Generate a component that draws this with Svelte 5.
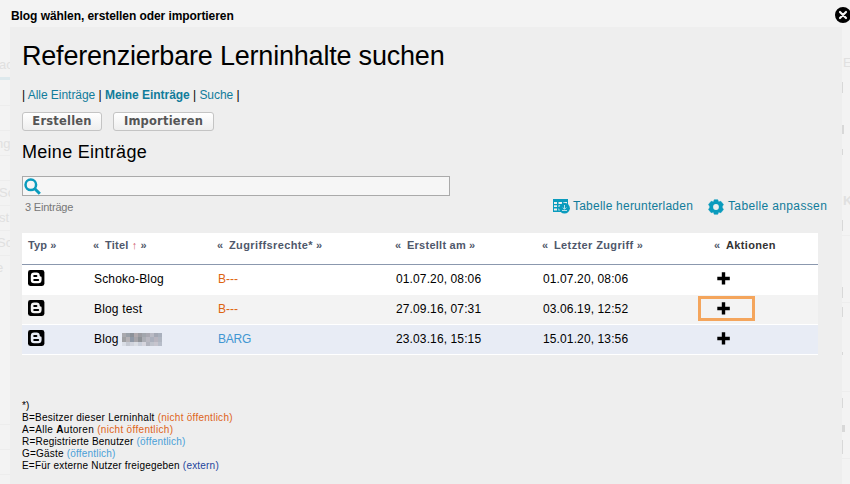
<script>
  const columns = [
    { label: 'Typ', after: true, w: 66, ls: 0.15 },
    { label: 'Titel', before: true, after: true, sorted: true, w: 124, ls: 0.25 },
    { label: 'Zugriffsrechte*', before: true, after: true, w: 178, ls: 0.38 },
    { label: 'Erstellt am', before: true, after: true, w: 147, ls: 0.25 },
    { label: 'Letzter Zugriff', before: true, after: true, w: 172, ls: 0.38 },
    { label: 'Aktionen', before: true, plain: true, w: 109, ls: 0.35 }
  ];
  const rows = [
    { title: 'Schoko-Blog', rights: 'B---', created: '01.07.20, 08:06', access: '01.07.20, 08:06' },
    { title: 'Blog test', rights: 'B---', created: '27.09.16, 07:31', access: '03.06.19, 12:52', marked: true },
    { title: 'Blog', rights: 'BARG', created: '23.03.16, 15:15', access: '15.01.20, 13:56', hidden: true, open: true }
  ];
  const mosaic = [
    '#a9a9ae', '#9aa0a8', '#8c9199', '#b0a9ad', '#9c9ca2', '#a2a6ad', '#aaa9b2', '#b9bac4', '#a4a8b4', '#a9b0bd',
    '#9fa0a3', '#b5b2b6', '#8f98a6', '#a6a4a9', '#8e9297', '#acaeb5', '#b9b8c1', '#abb0bd', '#b8b5bf', '#b0b6c1',
    '#d9dde5', '#c5c9d2', '#d0d3dc', '#dadde3', '#c9ced9', '#d6d5dd', '#b2b4be', '#bfc3cc', '#c7c5ce', '#b7bdc9'
  ];
</script>

<div class="page">
  <div class="ghost" aria-hidden="true">
    <span style="left:-1px;top:57px">ac</span>
    <i style="left:0;top:77px;width:10px;height:3px;background:#dde9ed"></i>
    <span style="left:-4px;top:136px">ng</span>
    <i class="rule" style="left:0;top:105px"></i>
    <i class="rule" style="left:0;top:130px"></i>
    <i class="rule" style="left:0;top:155px"></i>
    <i class="rule" style="left:0;top:180px"></i>
    <span style="left:-1px;top:185px">Sc</span>
    <i class="rule" style="left:0;top:205px"></i>
    <span style="left:-1px;top:210px">st</span>
    <i class="rule" style="left:0;top:230px"></i>
    <span style="left:-3px;top:235px">Sc</span>
    <i class="rule" style="left:0;top:255px"></i>
    <span style="left:-4px;top:260px">e</span>
    <i class="rule" style="left:0;top:424px"></i>
    <i class="rule" style="left:0;top:449px"></i>
    <i class="rule" style="left:0;top:474px"></i>
    <span style="left:843px;top:55px">E</span>
    <b style="left:843px;top:193px">K</b>
    <i style="left:842px;top:82px;width:1px;height:11px"></i>
    <i style="left:842px;top:125px;width:2px;height:9px"></i>
    <i style="left:842px;top:149px;width:1px;height:6px"></i>
    <i style="left:842px;top:220px;width:1px;height:11px"></i>
    <i class="rule" style="left:842px;top:235px"></i>
    <i style="left:842px;top:287px;width:1px;height:11px"></i>
    <i class="rule" style="left:842px;top:302px"></i>
    <i style="left:842px;top:307px;width:1px;height:10px"></i>
    <i style="left:842px;top:352px;width:1px;height:3px"></i>
    <i class="rule" style="left:842px;top:391px"></i>
    <i style="left:842px;top:398px;width:1px;height:10px"></i>
    <i style="left:842px;top:425px;width:3px;height:7px"></i>
    <i style="left:842px;top:440px;width:1px;height:14px"></i>
    <i class="rule" style="left:842px;top:458px"></i>
  </div>

  <header>
    <strong>Blog wählen, erstellen oder importieren</strong>
    <svg class="close" width="16" height="16" viewBox="0 0 16 16">
      <circle cx="8" cy="8" r="8" />
      <path d="M5 5l6 6M11 5l-6 6" stroke="#f3f3f3" stroke-width="2.2" stroke-linecap="round" />
    </svg>
  </header>

  <main>
    <h1>Referenzierbare Lerninhalte suchen</h1>
    <nav>| <a>Alle Einträge</a> | <a class="active">Meine Einträge</a> | <a>Suche</a> |</nav>
    <div class="buttons">
      <button class="create">Erstellen</button>
      <button class="import">Importieren</button>
    </div>
    <h2>Meine Einträge</h2>
    <div class="search">
      <svg width="17" height="17" viewBox="0 0 17 17" fill="none" stroke="#0a9bbd">
        <circle cx="6.8" cy="6.8" r="5.3" stroke-width="2.5" />
        <path d="M10.8 10.8l5 5" stroke-width="3" />
      </svg>
    </div>
    <div class="bar">
      <span class="count">3 Einträge</span>
      <a class="tool download">
        <svg width="17" height="15" viewBox="0 0 17 15">
          <path d="M0 0H15V13H0Z" fill="#0a9bbd" />
          <path d="M1 3H4V5H1ZM5.5 3H9V5H5.5ZM10.5 3H14V5H10.5ZM1 6.3H4V8H1ZM5.5 6.3H9V8H5.5ZM1 9.5H4V11.5H1ZM5.5 9.5H9V11.5H5.5Z" fill="#eee" />
          <circle cx="11.5" cy="9.2" r="5.4" fill="#0a9bbd" />
          <path d="M11.5 6V10M9.7 8.5L11.5 10.3L13.3 8.5M9 11.5H14" stroke="#b5dfe9" fill="none" />
        </svg>
        <span>Tabelle herunterladen</span>
      </a>
      <a class="tool adjust">
        <svg width="16" height="16" viewBox="0 0 16 16">
          <path d="M6.2 0.8H9.8L10.5 3L12.8 2.3L15.4 5.4L14 8L15.4 10.6L12.8 13.7L10.5 13L9.8 15.2H6.2L5.5 13L3.2 13.7L.6 10.6L2 8L.6 5.4L3.2 2.3L5.5 3Z" fill="#0a9bbd" stroke="#0a9bbd" stroke-width=".6" />
          <circle cx="8" cy="8" r="2.9" fill="#eee" />
        </svg>
        <span>Tabelle anpassen</span>
      </a>
    </div>

    <div class="table">
      <div class="row head">
        {#each columns as c}
          <div class="cell" class:plain={c.plain} style="width:{c.w}px;letter-spacing:{c.ls}px">
            {#if c.before}<span class="arrow before">«</span>{/if}<span>{c.label}</span>{#if c.sorted}<span class="sort">↑</span>{/if}{#if c.after}<span class="arrow after">»</span>{/if}
          </div>
        {/each}
      </div>
      {#each rows as r}
        <div class="row">
          <div class="cell typ">
            <svg width="17" height="16" viewBox="0 0 17 16">
              <rect width="16.4" height="16" rx="2.4" />
              <path class="b" d="M6.2 2.6H8.6Q11.6 2.6 11.7 5.4Q11.7 6.5 12.7 6.5Q13.6 6.6 13.6 7.8V9.8Q13.6 13.3 10.2 13.3H6.2Q2.8 13.3 2.8 10V6Q2.8 2.6 6.2 2.6Z" />
              <path d="M6.2 6H8.4M6.2 10H10.2" stroke="#000" stroke-width="2" stroke-linecap="round" />
            </svg>
          </div>
          <div class="cell title">
            {r.title}
            {#if r.hidden}
              <span class="mosaic">{#each mosaic as m}<i style="background:{m}"></i>{/each}</span>
            {/if}
          </div>
          <div class="cell rights" class:open={r.open}>{r.rights}</div>
          <div class="cell created">{r.created}</div>
          <div class="cell access">{r.access}</div>
          <div class="cell action">
            <svg width="13" height="13" viewBox="0 0 13 13"><path d="M4.8 .3H8.2V4.8H12.8V8.2H8.2V12.6H4.8V8.2H.3V4.8H4.8Z" /></svg>
            {#if r.marked}<div class="marker"></div>{/if}
          </div>
        </div>
      {/each}
    </div>

    <div class="legend">
      <p>*)</p>
      <p class="l1"><b>B</b>=<b>B</b>esitzer dieser Lerninhalt <em class="orange">(nicht öffentlich)</em></p>
      <p class="l2">A=Alle <b class="strong">A</b>utoren <em class="orange">(nicht öffentlich)</em></p>
      <p class="l3"><b>R</b>=<b>R</b>egistrierte Benutzer <em class="blue">(öffentlich)</em></p>
      <p class="l4"><b>G</b>=<b>G</b>äste <em class="blue">(öffentlich)</em></p>
      <p class="l5">E=Für externe Nutzer freigegeben <em class="navy">(extern)</em></p>
    </div>
  </main>
</div>

<style>
  :global(body) { margin: 0; }
  .page { position: relative; box-sizing: border-box; width: 850px; height: 484px; overflow: hidden; background: #f3f3f3; font: 12px "Liberation Sans", Arial, sans-serif; color: #000; }
  .ghost span, .ghost b, .ghost i { position: absolute; font-size: 13px; line-height: 15px; color: #e0e0e0; }
  .ghost i { background: #d8d8d8; }
  .ghost i.rule { width: 10px; height: 1px; background: #ededed; }
  header { position: relative; display: flex; justify-content: space-between; box-sizing: border-box; height: 27px; padding: 5px 0 0 11px; }
  header strong { font-size: 12px; line-height: 22px; letter-spacing: -0.07px; }
  .close { margin: 2px -1px 0 0; }
  main { position: relative; box-sizing: border-box; width: 832px; height: 457px; margin-left: 10px; padding: 12px 12px 0; background: #eee; }
  h1 { margin: 0; font-size: 27px; line-height: 34px; font-weight: 400; white-space: nowrap; letter-spacing: -0.2px; }
  nav { margin-top: 14px; line-height: 16px; white-space: nowrap; letter-spacing: -0.04px; }
  a { color: #117c9b; }
  .active { font-weight: 700; }
  .buttons { display: flex; gap: 11px; margin-top: 9px; }
  button { box-sizing: border-box; height: 19px; padding: 0; border: 1px solid #c4c4c4; border-radius: 3px; background: linear-gradient(#fff, #eee); color: #555; font: bold 11.5px/17px "DejaVu Sans", Verdana, sans-serif; letter-spacing: 0.2px; }
  .create { width: 80px; }
  .import { width: 101px; }
  h2 { margin: 9px 0 0; font-size: 18px; line-height: 24px; font-weight: 400; letter-spacing: 0.28px; }
  .search { box-sizing: border-box; display: flex; width: 428px; height: 20px; margin-top: 12px; padding: 1px; border: 1px solid #aaa; background: #f6f6f6; }
  .bar { display: flex; height: 37px; padding: 0 0 0 3px; white-space: nowrap; }
  .count { width: 528px; padding-top: 4px; font-size: 11px; line-height: 14px; letter-spacing: -0.2px; color: #777; }
  .tool { display: flex; line-height: 16px; padding-top: 2px; }
  .tool svg { margin-top: 1px; }
  .download { width: 155px; letter-spacing: 0.22px; }
  .download span { margin-left: 3px; }
  .adjust { letter-spacing: 0.36px; }
  .adjust span { margin-left: 4px; }
  .table { width: 796px; }
  .row { display: flex; box-sizing: border-box; height: 30px; background: #fff; }
  .row:nth-child(3) { background: #f3f3f3; border-bottom: 1px solid #fff; }
  .row:nth-child(4) { background: #e8ecf5; border-bottom: 1px solid #fff; }
  .row.head { height: 32px; border-bottom: 1px solid #8b98ae; font-size: 11px; font-weight: 700; color: #4f586b; }
  .cell { box-sizing: border-box; padding-left: 6px; line-height: 28px; white-space: nowrap; flex: none; }
  .head .cell { line-height: 24px; }
  .head .cell.plain { color: #333; }
  .head .cell:not(:first-child) { padding-left: 5px; }
  .arrow { display: inline-block; color: #4f586b; }
  .before { width: 12px; }
  .after { margin-left: 3px; }
  .sort { margin-left: 3px; color: #d0606a; font-weight: 400; }
  .typ { width: 66px; padding-top: 5px; line-height: 0; }
  .b { fill: #fff; }
  .row:nth-child(3) .b { fill: #f3f3f3; }
  .row:nth-child(4) .b { fill: #e8ecf5; }
  .title { width: 124px; display: flex; letter-spacing: 0.16px; }
  .rights { width: 178px; color: #de6410; }
  .rights.open { color: #4096d2; letter-spacing: -0.2px; }
  .created { width: 147px; letter-spacing: 0.12px; }
  .access { width: 172px; letter-spacing: 0.12px; }
  .action { position: relative; width: 109px; padding: 7px 0 0 8px; line-height: 0; }
  .marker { position: absolute; left: -11px; top: 1px; box-sizing: border-box; width: 57px; height: 25px; border: 3px solid #f4a55c; }
  .mosaic { display: grid; grid-template-columns: repeat(10, 4px); grid-auto-rows: 4.33px; width: 40px; height: 13px; margin: 8px 0 0 3px; }
  .mosaic i { display: block; }
  .legend { margin-top: 45px; font-size: 10px; line-height: 12px; white-space: nowrap; letter-spacing: 0.2px; }
  .legend p { margin: 0; }
  .legend .l1 { letter-spacing: 0.26px; }
  .legend .l2 { letter-spacing: 0.32px; }
  .legend b { font-weight: 400; }
  .legend b.strong { font-weight: 700; }
  em { font-style: normal; }
  .orange { color: #de6420; }
  .blue { color: #4aa0d8; }
  .navy { color: #1c449c; }
</style>
